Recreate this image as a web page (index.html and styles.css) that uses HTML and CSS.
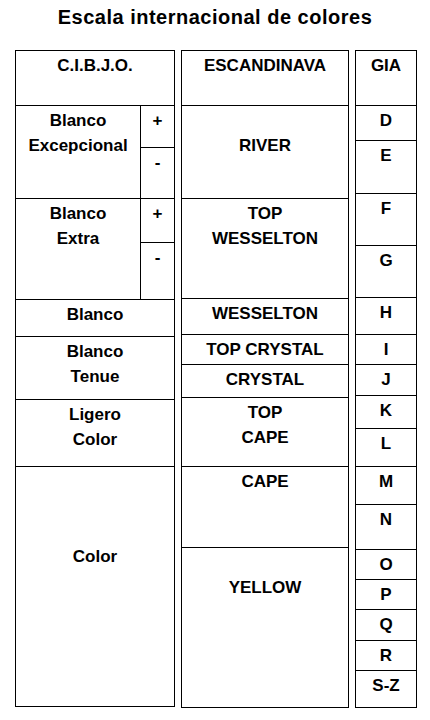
FILE: index.html
```html
<!DOCTYPE html>
<html lang="es">
<head>
<meta charset="utf-8">
<title>Escala internacional de colores</title>
<link rel="stylesheet" href="styles.css">
</head>
<body>
<h1 class="title">Escala internacional de colores</h1>
<div class="scale">
  <div class="col col-cibjo">
    <div class="cell">C.I.B.J.O.</div>
    <div class="cell split">
      <div class="split-label">Blanco<br>Excepcional</div>
      <div class="signs signs-exc">
        <div class="sign">+</div>
        <div class="sign">-</div>
      </div>
    </div>
    <div class="cell split">
      <div class="split-label">Blanco<br>Extra</div>
      <div class="signs signs-ext">
        <div class="sign">+</div>
        <div class="sign">-</div>
      </div>
    </div>
    <div class="cell">Blanco</div>
    <div class="cell">Blanco<br>Tenue</div>
    <div class="cell">Ligero<br>Color</div>
    <div class="cell drop-far">Color</div>
  </div>
  <div class="col col-scan">
    <div class="cell">ESCANDINAVA</div>
    <div class="cell drop">RIVER</div>
    <div class="cell">TOP<br>WESSELTON</div>
    <div class="cell">WESSELTON</div>
    <div class="cell">TOP CRYSTAL</div>
    <div class="cell">CRYSTAL</div>
    <div class="cell">TOP<br>CAPE</div>
    <div class="cell">CAPE</div>
    <div class="cell drop">YELLOW</div>
  </div>
  <div class="col col-gia">
    <div class="cell">GIA</div>
    <div class="cell">D</div>
    <div class="cell">E</div>
    <div class="cell">F</div>
    <div class="cell">G</div>
    <div class="cell">H</div>
    <div class="cell">I</div>
    <div class="cell">J</div>
    <div class="cell">K</div>
    <div class="cell">L</div>
    <div class="cell">M</div>
    <div class="cell">N</div>
    <div class="cell">O</div>
    <div class="cell">P</div>
    <div class="cell">Q</div>
    <div class="cell">R</div>
    <div class="cell">S-Z</div>
  </div>
</div>
</body>
</html>
```
FILE: styles.css
```css
* {
  box-sizing: border-box;
}

html, body {
  margin: 0;
  padding: 0;
  background: #ffffff;
}

body {
  font-family: "Liberation Sans", Arial, sans-serif;
  color: #000000;
  width: 430px;
}

.title {
  margin: 0;
  height: 34px;
  font-size: 20px;
  line-height: 34px;
  font-weight: bold;
  letter-spacing: 0.5px;
  text-align: center;
}

.scale {
  display: flex;
  gap: 6px;
  margin-top: 16px;
  padding-left: 15px;
  align-items: flex-start;
}

.col {
  display: grid;
  border: 1px solid #000;
}

.col-cibjo {
  width: 160px;
  grid-template-rows: 54px 93px 101px 37px 63px 67px 240px;
}

.col-scan {
  width: 168px;
  grid-template-rows: 54px 93px 100px 36px 30px 33px 69px 81px 160px;
}

.col-gia {
  width: 62px;
  grid-template-rows: 54px 35px 53px 52px 52px 37px 30px 31px 33px 38px 38px 45px 30px 30px 31px 30px 37px;
}

.cell {
  padding-top: 2px;
  font-size: 17px;
  font-weight: bold;
  line-height: 25px;
  text-align: center;
  white-space: nowrap;
}

.cell + .cell {
  border-top: 1px solid #000;
}

.drop {
  padding-top: 27px;
}

.drop-far {
  padding-top: 77px;
}

.split {
  display: grid;
  grid-template-columns: 1fr 34px;
  padding-top: 0;
}

.split-label {
  padding-top: 2px;
}

.signs {
  display: grid;
  border-left: 1px solid #000;
}

.signs-exc {
  grid-template-rows: 41px 51px;
}

.signs-ext {
  grid-template-rows: 43px 57px;
}

.sign {
  padding-top: 2px;
}

.sign + .sign {
  border-top: 1px solid #000;
}
```
